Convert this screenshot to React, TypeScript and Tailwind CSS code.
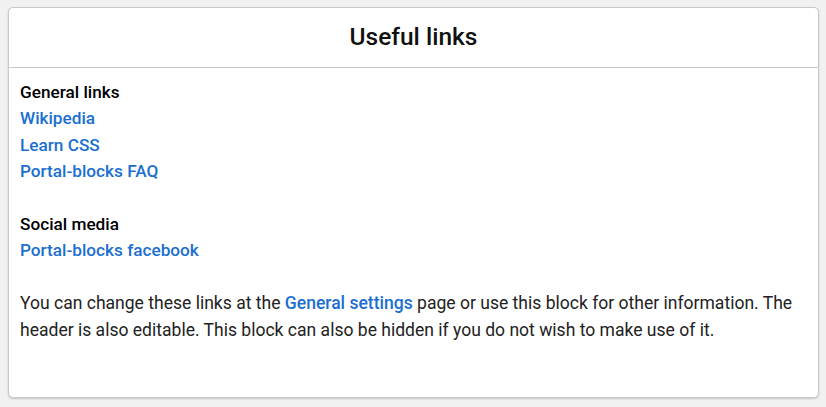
export default function App() {
  const link = "text-[#1a6fd1] font-medium";
  return (
    <div className="w-[826px] h-[407px] bg-[#f1f1f1] pt-[7px] pl-[8px]" style={{ fontFamily: "Roboto, 'Liberation Sans', sans-serif" }}>
      <div className="w-[811px] h-[391px] bg-white border border-[#c9c9c9] rounded-[5px] shadow-[0_1px_2px_rgba(0,0,0,0.18)] flex flex-col">
        <div className="h-[60px] flex items-center justify-center border-b border-[#c9c9c9]">
          <h2 className="text-[24.5px] font-medium text-[#111] leading-none">Useful links</h2>
        </div>
        <div className="px-[11px] pt-[11px] text-[17.2px] leading-[26.4px] text-[#111]">
          <div className="text-black font-medium">General links</div>
          <div className={link}>Wikipedia</div>
          <div className={link}>Learn CSS</div>
          <div className={link}>Portal-blocks FAQ</div>
          <div className="h-[26.4px]" />
          <div className="text-black font-medium">Social media</div>
          <div className={link}>Portal-blocks facebook</div>
          <div className="h-[26.4px]" />
          <p className="text-[#222] text-[17.55px]">
            You can change these links at the <span className={link}>General settings</span> page or use this block for other information. The header is also editable. This block can also be hidden if you do not wish to make use of it.
          </p>
        </div>
      </div>
    </div>
  );
}
